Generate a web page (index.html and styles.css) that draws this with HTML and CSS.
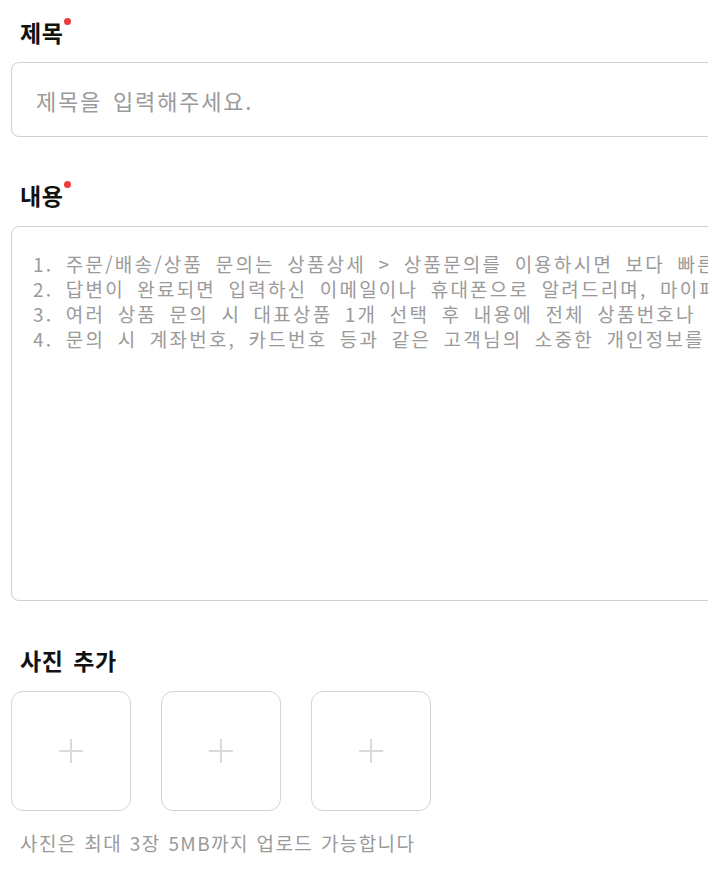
FILE: index.html
```html
<!DOCTYPE html>
<html lang="ko">
<head>
    <meta charset="UTF-8">
    <meta name="viewport" content="width=device-width, initial-scale=1.0">
    <title>문의하기</title>
    <link rel="stylesheet" href="styles.css">
</head>
<body>
    <form class="inquiry-form">
        <div class="field">
            <label class="field-label required" for="title">제목</label>
            <input class="text-input" id="title" type="text" placeholder="제목을 입력해주세요.">
        </div>

        <div class="field field-content">
            <label class="field-label required" for="content">내용</label>
            <textarea class="text-area" id="content" wrap="off" placeholder="1. 주문/배송/상품 문의는 상품상세 &gt; 상품문의를 이용하시면 보다 빠른 답변을 받으실 수 있습니다.&#10;2. 답변이 완료되면 입력하신 이메일이나 휴대폰으로 알려드리며, 마이페이지에서 확인하실 수 있습니다.&#10;3. 여러 상품 문의 시 대표상품 1개 선택 후 내용에 전체 상품번호나 주문번호를 남겨주세요.&#10;4. 문의 시 계좌번호, 카드번호 등과 같은 고객님의 소중한 개인정보를 남기지 말아주세요."></textarea>
        </div>

        <div class="field field-photo">
            <span class="field-label">사진 추가</span>
            <div class="photo-list">
                <button type="button" class="photo-add" aria-label="사진 추가">
                    <svg width="26" height="26" viewBox="0 0 26 26"><path d="M13 1v24M1 13h24" stroke="#dadada" stroke-width="2" fill="none"/></svg>
                </button>
                <button type="button" class="photo-add" aria-label="사진 추가">
                    <svg width="26" height="26" viewBox="0 0 26 26"><path d="M13 1v24M1 13h24" stroke="#dadada" stroke-width="2" fill="none"/></svg>
                </button>
                <button type="button" class="photo-add" aria-label="사진 추가">
                    <svg width="26" height="26" viewBox="0 0 26 26"><path d="M13 1v24M1 13h24" stroke="#dadada" stroke-width="2" fill="none"/></svg>
                </button>
            </div>
            <p class="photo-help">사진은 최대 3장 5MB까지 업로드 가능합니다</p>
        </div>
    </form>
</body>
</html>
```

FILE: styles.css
```css
html, body {
    overflow: hidden;
}

body {
    margin: 0;
    background: #fff;
    font-family: "Noto Sans CJK KR", "Noto Sans", sans-serif;
    color: #111;
}

.inquiry-form {
    width: 1000px;
    padding: 14px 0 0 11px;
}

.field {
    display: flex;
    flex-direction: column;
}

.field-label {
    align-self: flex-start;
    position: relative;
    margin-left: 9px;
    font-size: 23px;
    font-weight: 700;
    line-height: 36px;
    letter-spacing: 0.5px;
    word-spacing: 3px;
}

.field-label.required::after {
    content: "";
    position: absolute;
    top: 4px;
    right: -8px;
    width: 7px;
    height: 7px;
    border-radius: 50%;
    background: #ee3b3b;
}

.text-input,
.text-area {
    box-sizing: border-box;
    width: 100%;
    border: 1px solid #cfcfcf;
    border-radius: 8px;
    font-family: inherit;
    color: #111;
    outline: none;
    background: #fff;
}

.text-input {
    height: 75px;
    margin-top: 12px;
    padding: 0 24px;
    font-size: 22px;
    letter-spacing: 1.8px;
    word-spacing: 3px;
}

.text-input::placeholder,
.text-area::placeholder {
    color: #9a9a9a;
}

.field-content {
    margin-top: 40px;
}

.text-area {
    height: 375px;
    margin-top: 13px;
    padding: 24px 21px;
    font-size: 19px;
    line-height: 25px;
    letter-spacing: 2.2px;
    word-spacing: 5px;
    resize: none;
    overflow: hidden;
}

.field-photo {
    margin-top: 41px;
}

.photo-list {
    display: flex;
    gap: 30px;
    margin-top: 13px;
}

.photo-add {
    display: flex;
    align-items: center;
    justify-content: center;
    width: 120px;
    height: 120px;
    padding: 0;
    border: 1px solid #d4d4d4;
    border-radius: 12px;
    background: #fff;
    cursor: pointer;
}

.photo-help {
    margin: 18px 0 0 9px;
    font-size: 19px;
    color: #9a9a9a;
    letter-spacing: 1.4px;
    word-spacing: 1px;
}
```
